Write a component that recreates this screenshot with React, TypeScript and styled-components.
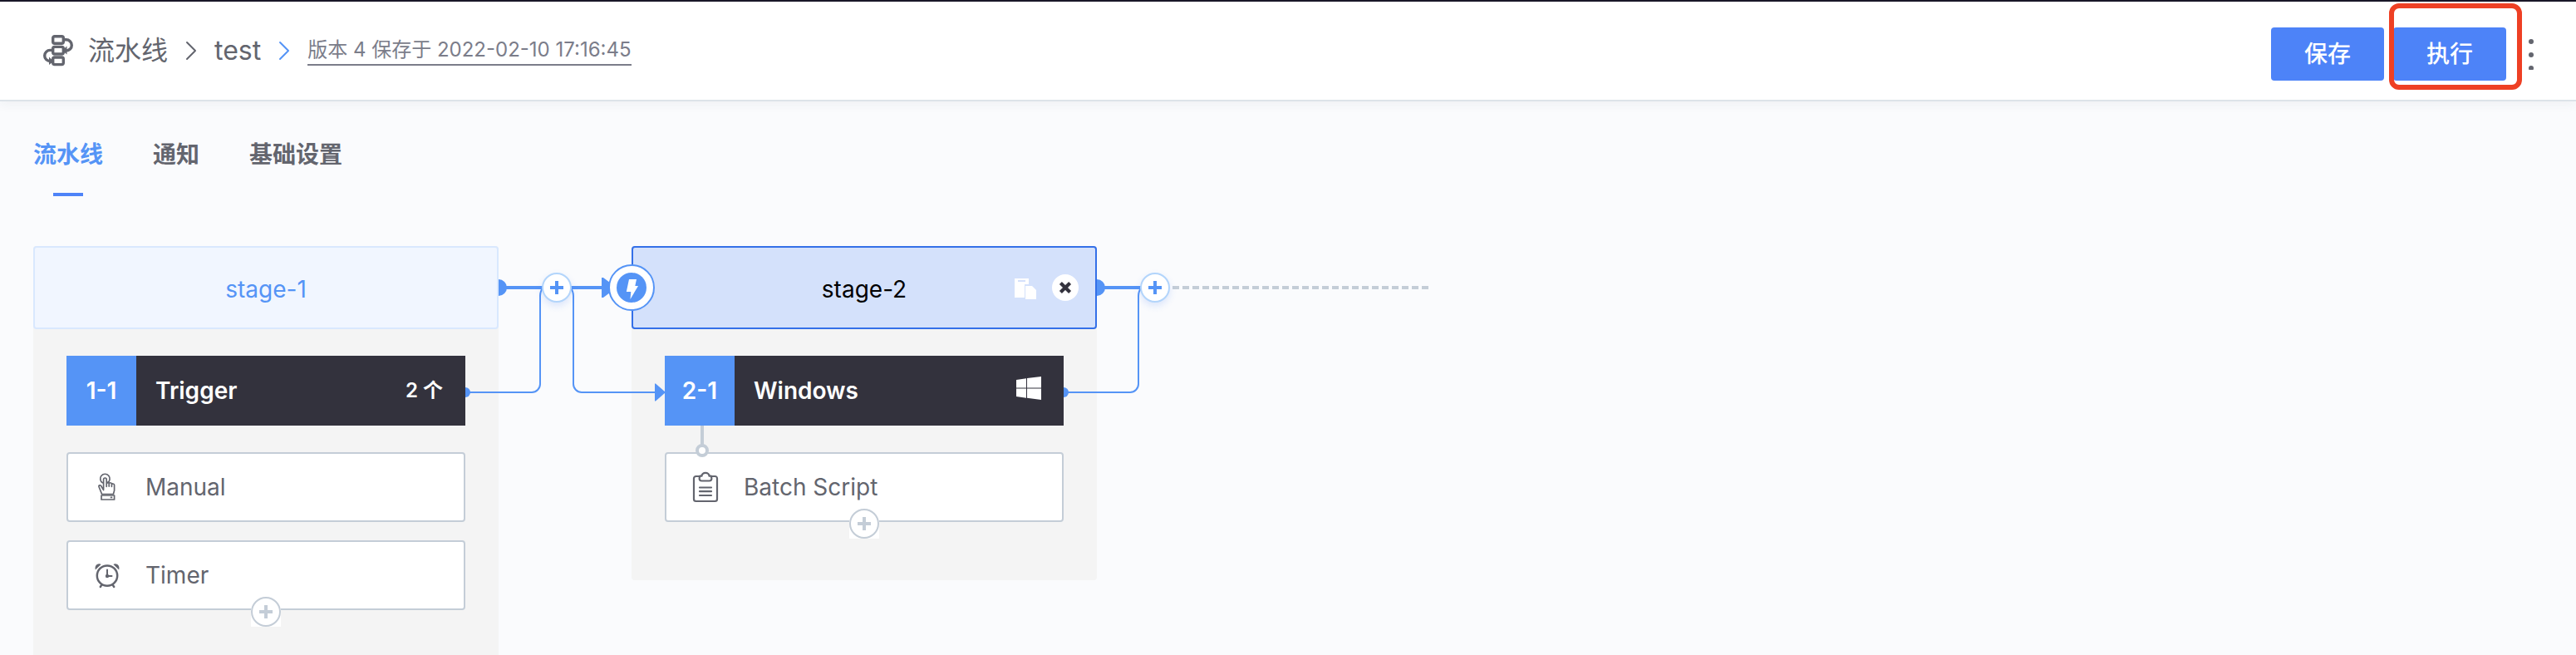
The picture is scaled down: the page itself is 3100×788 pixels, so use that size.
import React from 'react';
import styled, { createGlobalStyle } from 'styled-components';

const blue = '#5594f6';
const line = '#c4cdd7';
const ink = '#63656e';

const GlobalStyle = createGlobalStyle`
  *, *::before, *::after { box-sizing: border-box; }
  body {
    margin: 0;
    background: #fafbfd;
    color: ${ink};
    font-family: Inter, "Noto Sans CJK SC", sans-serif;
    font-size: 28px;
    line-height: 40px;
  }
  button { font: inherit; border: 0; padding: 0; cursor: pointer; }
  a { color: inherit; text-decoration: none; }
  svg { display: block; }
`;

const Page = styled.div`
  height: 100vh;
  display: flex;
  flex-direction: column;
  overflow: hidden;
`;

const Header = styled.header`
  position: relative;
  z-index: 3;
  flex: none;
  display: flex;
  align-items: center;
  justify-content: space-between;
  height: 122px;
  padding: 0 51px 0 50px;
  background: #fff;
  border-top: 2px solid #191628;
  border-bottom: 2px solid #dde3e9;
  box-shadow: 0 4px 12px rgba(40, 50, 80, 0.05);
`;

const Breadcrumb = styled.nav`
  display: flex;
  align-items: center;
`;

const Crumb = styled.a`
  display: flex;
  align-items: center;
  gap: 16px;
  font-size: 32px;
`;

const Chevron = styled.svg<{ $active?: boolean }>`
  width: 14px;
  height: 24px;
  margin: 0 21px;
  fill: none;
  stroke: ${p => (p.$active ? blue : ink)};
  stroke-width: 2;
  stroke-linecap: round;
  stroke-linejoin: round;
`;

const Version = styled.a`
  border-bottom: 2px solid #7b7d8a;
  color: #7b7d8a;
  font-size: 24px;
  line-height: 34px;
`;

const Actions = styled.div`
  display: flex;
  align-items: center;
  gap: 11px;
  padding-top: 8px;
`;

const PrimaryButton = styled.button`
  width: 136px;
  height: 64px;
  border-radius: 4px;
  background: #4d83f8;
  color: #fff;
  font-size: 28px;
  font-weight: 500;
`;

const Highlighted = styled.div`
  position: relative;
  display: flex;
  &::after {
    content: '';
    position: absolute;
    inset: -29px -19px -11px -5px;
    border: 6px solid #ee4024;
    border-radius: 12px;
    pointer-events: none;
  }
`;

const MoreButton = styled.button`
  margin-left: 16px;
  background: none;
  color: ${ink};
`;

const Tabs = styled.nav`
  flex: none;
  display: flex;
  gap: 60px;
  padding: 44px 40px 0;
`;

const Tab = styled.a<{ $active?: boolean }>`
  display: flex;
  flex-direction: column;
  align-items: center;
  gap: 26px;
  color: ${p => (p.$active ? blue : ink)};
  font-weight: 700;
  &::after {
    content: '';
    width: 36px;
    height: 4px;
    background: ${p => (p.$active ? '#4d83f8' : 'transparent')};
  }
`;

const Canvas = styled.main`
  flex: 1;
  min-height: 0;
  display: flex;
  align-items: flex-start;
  padding: 60px 40px 0;
`;

const Stage = styled.section`
  position: relative;
  flex: none;
  width: 560px;
  background: #f4f4f4;
  border-radius: 4px;
`;

const StageHead = styled.header<{ $selected?: boolean }>`
  display: grid;
  grid-template-columns: 1fr auto 1fr;
  align-items: center;
  height: 100px;
  padding: 0 20px;
  border: 2px solid ${p => (p.$selected ? '#3470e8' : '#d9e8fe')};
  border-radius: 4px;
  background: ${p => (p.$selected ? '#d4e1fb' : '#f1f6ff')};
  color: ${p => (p.$selected ? '#000' : blue)};
`;

const StageName = styled.h2`
  grid-column: 2;
  margin: 0;
  padding-top: 4px;
  font-size: 28px;
  font-weight: 400;
`;

const StageTools = styled.div`
  display: flex;
  align-items: center;
  justify-content: flex-end;
  gap: 18px;
`;

const ToolButton = styled.button<{ $round?: boolean }>`
  display: grid;
  place-items: center;
  width: ${p => (p.$round ? '32px' : '28px')};
  height: 32px;
  border-radius: 16px;
  background: ${p => (p.$round ? '#fff' : 'none')};
`;

const StageBody = styled.div`
  padding: 32px 40px 70px;
`;

const Entry = styled.span`
  position: absolute;
  z-index: 2;
  top: 22px;
  left: -28px;
`;

const Job = styled.div`
  display: flex;
  align-items: center;
  height: 84px;
  margin-bottom: 32px;
  padding-right: 27px;
  background: #33323d;
  color: #fff;
  font-weight: 600;
`;

const JobIndex = styled.span`
  display: grid;
  place-items: center;
  width: 84px;
  height: 84px;
  background: ${blue};
`;

const JobName = styled.h3`
  flex: 1;
  margin: 0;
  padding-left: 23px;
  font-size: 28px;
  font-weight: 600;
`;

const JobCount = styled.span`
  font-size: 24px;
`;

const Atoms = styled.ul`
  position: relative;
  display: flex;
  flex-direction: column;
  gap: 22px;
  margin: 0;
  padding: 0;
  list-style: none;
`;

const Atom = styled.li`
  display: flex;
  align-items: center;
  gap: 28px;
  height: 84px;
  padding-left: 29px;
  border: 2px solid ${line};
  border-radius: 4px;
  background: #fff;
`;

const AtomLink = styled.svg`
  position: absolute;
  top: -32px;
  left: 37px;
`;

const AddAtom = styled.button`
  position: absolute;
  bottom: -20px;
  left: 222px;
  width: 36px;
  height: 36px;
  background: #fff;
`;

const Connector = styled.div<{ $last?: boolean }>`
  position: relative;
  z-index: 1;
  flex: none;
  width: ${p => (p.$last ? '420px' : '160px')};
  height: 200px;
`;

const Wires = styled.svg`
  overflow: visible;
  fill: none;
  stroke: ${blue};
  stroke-width: 2;
`;

const AddStage = styled.button`
  position: absolute;
  top: 32px;
  left: 52px;
  display: grid;
  place-items: center;
  width: 36px;
  height: 36px;
  border: 2px solid #b3d5fb;
  border-radius: 50%;
  background: #fff;
  box-shadow: 0 4px 8px rgba(60, 120, 240, 0.16);
`;

const PipelineIcon = () => (
  <svg width="40" height="40" viewBox="0 0 40 40" fill="none" stroke={ink} strokeWidth="3.4" aria-hidden="true">
    <rect x="13.7" y="2.7" width="12.6" height="8.6" rx="2" />
    <rect x="13.7" y="15.4" width="12.6" height="8.6" rx="2" />
    <rect x="13.7" y="28" width="12.6" height="8.6" rx="2" />
    <path d="M27 6.800h2.700a6.600 6.600 0 0 1 0 13.200H27M13 19.400h-2.700a6.600 6.600 0 0 0 0 13.200H13" />
    <path d="M30.500 14.500L25 19.800l5.500 4.700zM9 27.500l5.500 5.300L9 37z" fill={ink} stroke="none" />
  </svg>
);

const HandIcon = () => (
  <svg width="36" height="36" viewBox="0 0 36 36" fill="none" stroke={ink} strokeWidth="1.7" strokeLinejoin="round" strokeLinecap="round" aria-hidden="true">
    <path d="M12.400 12.800a5.700 5.700 0 1 1 6 0" />
    <path d="M13.600 20V8.800a1.800 1.800 0 0 1 3.600 0V17M13.600 21.500l-3-5c-1-1.400-3.200-.6-2.600 1l3.600 9h13.800l1.200-4.400v-6.600c0-2-3-2-3.200-.2v2-3c0-2-3-2-3.200-.2v3-3.400c-.2-1.800-3-1.800-3 .2v3.400" />
    <path d="M11 28h15.600v5H11zM22.500 30.400h1" />
  </svg>
);

const ClockIcon = () => (
  <svg width="36" height="36" viewBox="0 0 36 36" fill="none" stroke={ink} strokeWidth="2.500" strokeLinecap="round" aria-hidden="true">
    <circle cx="18" cy="18.600" r="12.200" />
    <path d="M18 11.500v7.600h5.500" strokeWidth="2" />
    <circle cx="18" cy="19" r="2.200" fill={ink} stroke="none" />
    <path d="M11.400 29.600L9.800 32M24.600 29.600l1.600 2.400" />
    <path d="M3.800 11.400C3 8.600 4 6 5.800 5c1.600-1 3.600-1 4.800 0zM32.200 11.400c.8-2.800-.2-5.400-2-6.400-1.600-1-3.600-1-4.800 0z" fill={ink} stroke="none" />
  </svg>
);

const ClipboardIcon = () => (
  <svg width="36" height="40" viewBox="0 0 36 40" fill="none" stroke={ink} strokeWidth="2.200" strokeLinejoin="round" strokeLinecap="round" aria-hidden="true">
    <path d="M11 7H6.500A2.500 2.500 0 0 0 4 9.500v25A2.500 2.500 0 0 0 6.500 37h23a2.500 2.500 0 0 0 2.500-2.500v-25A2.500 2.500 0 0 0 29.500 7H25" />
    <path d="M13.500 12.500h9c2.200 0 3.200-1.600 2.800-3.400l-.6-2.400h-2.200c0-5-9-5-9 0h-2.200l-.6 2.400c-.4 1.800.6 3.400 2.800 3.400z" />
    <path d="M11 20.500h14M11 25.200h14M11 30h14" />
  </svg>
);

const WindowsIcon = () => (
  <svg width="30" height="34" viewBox="0 0 30 34" fill="#fff" role="img" aria-label="Windows">
    <path d="M0 4l12-1.700v11.200H0zM13 2.100L30 0v13.500H13zM0 14.500h12v11.200L0 24zM13 14.500h17V28l-17-2.200z" />
  </svg>
);

const CopyIcon = () => (
  <svg width="28" height="28" viewBox="0 0 28 28" aria-hidden="true">
    <path d="M1 3h17v7h-5v16H1z" fill="#fff" />
    <path d="M5 6h9" stroke="#d4e1fb" strokeWidth="2" />
    <path d="M14 12h8l5 5v12H14z" fill="#fff" />
  </svg>
);

const CloseIcon = () => (
  <svg width="16" height="16" viewBox="0 0 16 16" stroke="#33323d" strokeWidth="4.200" aria-hidden="true">
    <path d="M2.400 2.400l11.200 11.200M13.600 2.400L2.400 13.600" />
  </svg>
);

const BoltIcon = () => (
  <svg width="56" height="56" viewBox="0 0 56 56" aria-hidden="true">
    <circle cx="28" cy="28" r="27" fill="#fff" stroke={blue} strokeWidth="2" />
    <circle cx="28" cy="28" r="18" fill={blue} />
    <path d="M25 18h9l-1.700 8H36l-9.500 16 .8-9h-5.500z" fill="#fff" />
  </svg>
);

const AddAtomButton = ({ label }: { label: string }) => (
  <AddAtom aria-label={label}>
    <svg width="36" height="36" viewBox="0 0 36 36" fill="none" stroke={line} aria-hidden="true">
      <circle cx="18" cy="18" r="17" strokeWidth="2" />
      <path d="M10 18h16M18 10v16" strokeWidth="4" />
    </svg>
  </AddAtom>
);

const StageConnector = ({ last }: { last?: boolean }) => (
  <Connector $last={last}>
    <Wires width="160" height="200" viewBox="0 0 160 200" aria-hidden="true">
      <path d="M0 40a10 10 0 0 1 0 20z" fill={blue} stroke="none" />
      <path d={last ? 'M0 50h70' : 'M0 50h126'} strokeWidth="4" />
      <path d="M-40 170a6 6 0 0 1 0 12z" fill={blue} stroke="none" />
      <path d="M-40 176H40a10 10 0 0 0 10-10V60q0-6 4-10" />
      {last ? (
        <path d="M91 50h310" stroke={line} strokeWidth="4" strokeDasharray="8 4" />
      ) : (
        <>
          <path d="M86 50q4 4 4 10v106a10 10 0 0 0 10 10h90" />
          <path d="M124 38h2l16 12-16 12h-2z" fill={blue} stroke="none" />
          <path d="M188 165.500h1L201 176l-12 10.500h-1z" fill={blue} stroke="none" />
        </>
      )}
    </Wires>
    <AddStage aria-label="添加阶段">
      <svg width="16" height="16" viewBox="0 0 16 16" stroke={blue} strokeWidth="4" aria-hidden="true">
        <path d="M0 8h16M8 0v16" />
      </svg>
    </AddStage>
  </Connector>
);

export default function App() {
  return (
    <>
      <GlobalStyle />
      <Page>
        <Header>
          <Breadcrumb>
            <Crumb href="#pipelines">
              <PipelineIcon />
              流水线
            </Crumb>
            <Chevron viewBox="0 0 14 24"><path d="M2 2l10 10L2 22" /></Chevron>
            <Crumb href="#test">test</Crumb>
            <Chevron $active viewBox="0 0 14 24"><path d="M2 2l10 10L2 22" /></Chevron>
            <Version href="#version">版本 4 保存于 2022-02-10 17:16:45</Version>
          </Breadcrumb>
          <Actions>
            <PrimaryButton>保存</PrimaryButton>
            <Highlighted>
              <PrimaryButton>执行</PrimaryButton>
            </Highlighted>
            <MoreButton aria-label="更多">
              <svg width="6" height="38" viewBox="0 0 6 38" fill={ink} aria-hidden="true">
                <circle cx="3" cy="4" r="3" />
                <circle cx="3" cy="20" r="3" />
                <circle cx="3" cy="36" r="3" />
              </svg>
            </MoreButton>
          </Actions>
        </Header>

        <Tabs>
          <Tab $active href="#pipeline">流水线</Tab>
          <Tab href="#notice">通知</Tab>
          <Tab href="#settings">基础设置</Tab>
        </Tabs>

        <Canvas>
          <Stage>
            <StageHead>
              <StageName>stage-1</StageName>
            </StageHead>
            <StageBody>
              <Job>
                <JobIndex>1-1</JobIndex>
                <JobName>Trigger</JobName>
                <JobCount>2 个</JobCount>
              </Job>
              <Atoms>
                <Atom><HandIcon />Manual</Atom>
                <Atom><ClockIcon />Timer</Atom>
                <AddAtomButton label="添加触发器" />
              </Atoms>
            </StageBody>
          </Stage>

          <StageConnector />

          <Stage>
            <Entry><BoltIcon /></Entry>
            <StageHead $selected>
              <StageName>stage-2</StageName>
              <StageTools>
                <ToolButton aria-label="复制阶段"><CopyIcon /></ToolButton>
                <ToolButton $round aria-label="删除阶段"><CloseIcon /></ToolButton>
              </StageTools>
            </StageHead>
            <StageBody>
              <Job>
                <JobIndex>2-1</JobIndex>
                <JobName>Windows</JobName>
                <WindowsIcon />
              </Job>
              <Atoms>
                <Atom><ClipboardIcon />Batch Script</Atom>
                <AtomLink width="16" height="38" viewBox="0 0 16 38" fill="#fff" stroke={line} strokeWidth="4" aria-hidden="true">
                  <path d="M8 0v24" />
                  <circle cx="8" cy="30" r="6" />
                </AtomLink>
                <AddAtomButton label="添加插件" />
              </Atoms>
            </StageBody>
          </Stage>

          <StageConnector last />
        </Canvas>
      </Page>
    </>
  );
}
